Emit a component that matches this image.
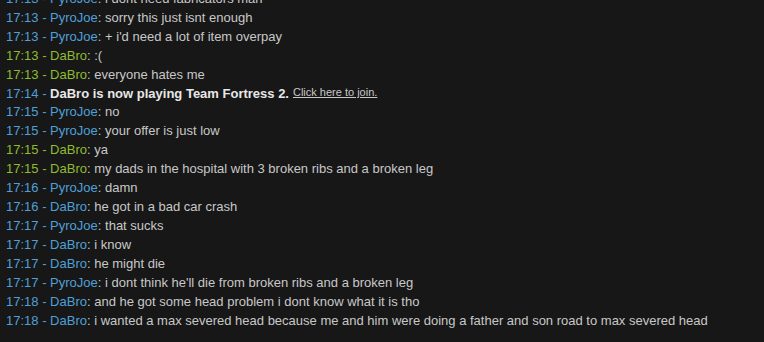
const lines = [
  { t: "17:13", name: "PyroJoe", c: "blue", msg: "i dont need fabricators man" },
  { t: "17:13", name: "PyroJoe", c: "blue", msg: "sorry this just isnt enough" },
  { t: "17:13", name: "PyroJoe", c: "blue", msg: "+ i'd need a lot of item overpay" },
  { t: "17:13", name: "DaBro", c: "green", msg: ":(" },
  { t: "17:13", name: "DaBro", c: "green", msg: "everyone hates me" },
  { t: "17:14", system: "DaBro is now playing Team Fortress 2." },
  { t: "17:15", name: "PyroJoe", c: "blue", msg: "no" },
  { t: "17:15", name: "PyroJoe", c: "blue", msg: "your offer is just low" },
  { t: "17:15", name: "DaBro", c: "green", msg: "ya" },
  { t: "17:15", name: "DaBro", c: "green", msg: "my dads in the hospital with 3 broken ribs and a broken leg" },
  { t: "17:16", name: "PyroJoe", c: "blue", msg: "damn" },
  { t: "17:16", name: "DaBro", c: "blue", msg: "he got in a bad car crash" },
  { t: "17:17", name: "PyroJoe", c: "blue", msg: "that sucks" },
  { t: "17:17", name: "DaBro", c: "blue", msg: "i know" },
  { t: "17:17", name: "DaBro", c: "blue", msg: "he might die" },
  { t: "17:17", name: "PyroJoe", c: "blue", msg: "i dont think he'll die from broken ribs and a broken leg" },
  { t: "17:18", name: "DaBro", c: "blue", msg: "and he got some head problem i dont know what it is tho" },
  { t: "17:18", name: "DaBro", c: "blue", msg: "i wanted a max severed head because me and him were doing a father and son road to max severed head" },
];

export default function App() {
  return (
    <div
      className="w-[764px] h-[342px] overflow-hidden bg-[#171717] text-[13px] leading-[19px]"
      style={{ fontFamily: '"Liberation Sans", Arial, sans-serif' }}
    >
      <div className="-mt-[11px] pl-[6px]">
        {lines.map((l, i) => {
          const color = l.c === "green" ? "text-[#8fbb2f]" : "text-[#4fa0d8]";
          if (l.system) {
            return (
              <div key={i} className="whitespace-nowrap h-[18px] leading-[19px]">
                <span className="text-[#4fa0d8]">{l.t} - </span>
                <span className="font-bold text-[#e8e8e8]">{l.system}</span>
                <span className="ml-[4px] text-[11px] leading-none underline text-[#c8c8c8] relative -top-[2px]">
                  Click here to join.
                </span>
              </div>
            );
          }
          return (
            <div key={i} className="whitespace-nowrap h-[19px]">
              <span className={color}>
                {l.t} - {l.name}
              </span>
              <span className="text-[#c8c8c8]">: {l.msg}</span>
            </div>
          );
        })}
      </div>
    </div>
  );
}
